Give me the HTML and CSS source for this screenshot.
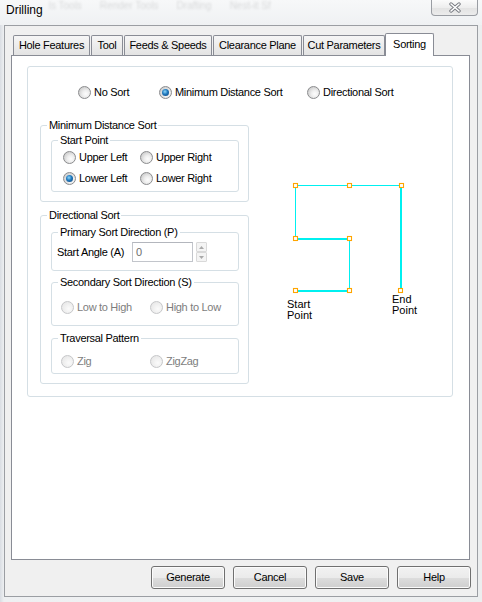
FILE: index.html
```html
<!DOCTYPE html>
<html>
<head>
<meta charset="utf-8">
<title>Drilling</title>
<link rel="stylesheet" href="styles.css">
</head>
<body>
<div class="window">
  <div class="titlebar">
    <div class="title">Drilling</div>
    <div class="ghost"><span>ls Tools</span><span>Render Tools</span><span>Drafting</span><span>Nest-it Sf</span></div>
    <div class="close">
      <svg width="14" height="11" viewBox="0 0 14 11">
        <path d="M3 2 L11 9 M11 2 L3 9" stroke="#777a80" stroke-width="3.4" stroke-linecap="round" fill="none"/>
        <path d="M3 2 L11 9 M11 2 L3 9" stroke="#ffffff" stroke-width="1.6" stroke-linecap="round" fill="none"/>
      </svg>
    </div>
  </div>
  <div class="client">
    <div class="tabs">
      <div class="tab t-hole">Hole Features</div>
      <div class="tab t-tool">Tool</div>
      <div class="tab t-feeds">Feeds &amp; Speeds</div>
      <div class="tab t-clear">Clearance Plane</div>
      <div class="tab t-cut">Cut Parameters</div>
      <div class="tab tab-active t-sort">Sorting</div>
    </div>
    <div class="panel">
      <div class="main-group">
        <div class="sort-row">
          <div class="radio r-nosort"><span class="dot"></span>No Sort</div>
          <div class="radio r-min"><span class="dot checked"></span>Minimum Distance Sort</div>
          <div class="radio"><span class="dot"></span>Directional Sort</div>
        </div>
        <div class="content">
          <div class="left-col">
            <fieldset class="group g-min">
              <legend>Minimum Distance Sort</legend>
              <fieldset class="group sub g-start">
                <legend>Start Point</legend>
                <div class="radio-grid grid-start">
                  <div class="radio"><span class="dot"></span>Upper Left</div>
                  <div class="radio"><span class="dot"></span>Upper Right</div>
                  <div class="radio"><span class="dot checked"></span>Lower Left</div>
                  <div class="radio"><span class="dot"></span>Lower Right</div>
                </div>
              </fieldset>
            </fieldset>
            <fieldset class="group g-dir">
              <legend>Directional Sort</legend>
              <fieldset class="group sub g-primary">
                <legend>Primary Sort Direction (P)</legend>
                <div class="angle-row">
                  <span class="angle-label">Start Angle (A)</span>
                  <span class="textbox">0</span>
                  <span class="spin">
                    <span class="spin-btn"><svg width="5" height="3" viewBox="0 0 5 3"><path d="M0 3 L2.5 0 L5 3 Z" fill="#a9a9a9"/></svg></span>
                    <span class="spin-btn"><svg width="5" height="3" viewBox="0 0 5 3"><path d="M0 0 L5 0 L2.5 3 Z" fill="#a9a9a9"/></svg></span>
                  </span>
                </div>
              </fieldset>
              <fieldset class="group sub g-second">
                <legend>Secondary Sort Direction (S)</legend>
                <div class="radio-grid grid-dis g-second-row">
                  <div class="radio disabled"><span class="dot"></span>Low to High</div>
                  <div class="radio disabled"><span class="dot"></span>High to Low</div>
                </div>
              </fieldset>
              <fieldset class="group sub g-trav">
                <legend>Traversal Pattern</legend>
                <div class="radio-grid grid-dis g-trav-row">
                  <div class="radio disabled"><span class="dot"></span>Zig</div>
                  <div class="radio disabled"><span class="dot"></span>ZigZag</div>
                </div>
              </fieldset>
            </fieldset>
          </div>
          <svg class="diagram" width="150" height="150" viewBox="0 0 150 150">
            <g fill="none" stroke="#00f0f0">
              <path d="M15.5 10.5 H121" stroke-width="1"/>
              <path d="M15.5 10.5 V63.5" stroke-width="1"/>
              <path d="M69.5 63.5 V115.5" stroke-width="1"/>
              <path d="M15 64 H70" stroke-width="2"/>
              <path d="M15 116 H70" stroke-width="2"/>
              <path d="M121 10 V116" stroke-width="2"/>
            </g>
            <g fill="#ffffff" stroke="#ffa500" stroke-width="1.1">
              <rect x="13.5" y="8.5" width="4" height="4"/>
              <rect x="67.5" y="8.5" width="4" height="4"/>
              <rect x="119.5" y="8.5" width="4" height="4"/>
              <rect x="13.5" y="61.5" width="4" height="4"/>
              <rect x="67.5" y="61.5" width="4" height="4"/>
              <rect x="13.5" y="113.5" width="4" height="4"/>
              <rect x="67.5" y="113.5" width="4" height="4"/>
              <rect x="118.5" y="113.5" width="4" height="4"/>
            </g>
            <g class="dtext">
              <text x="7" y="133">Start</text>
              <text x="7" y="144">Point</text>
              <text x="112" y="128">End</text>
              <text x="112" y="139">Point</text>
            </g>
          </svg>
        </div>
      </div>
    </div>
    <div class="buttons">
      <div class="btn">Generate</div>
      <div class="btn">Cancel</div>
      <div class="btn">Save</div>
      <div class="btn">Help</div>
    </div>
  </div>
</div>
</body>
</html>
```

FILE: styles.css
```css
html, body {
  margin: 0;
  padding: 0;
}

body {
  width: 482px;
  height: 602px;
  overflow: hidden;
  background: #eceef0;
  font-family: "Liberation Sans", Arial, sans-serif;
  font-size: 11px;
  letter-spacing: -0.3px;
  color: #000;
}

.window {
  height: 602px;
  display: flex;
  flex-direction: column;
  background: linear-gradient(90deg, #d9dde3 0, #eef0f2 4px, #f1f2f3 50%, #eceeef 100%);
}

/* ---------- title bar ---------- */
.titlebar {
  height: 25px;
  flex-shrink: 0;
  display: flex;
  align-items: flex-start;
  background: linear-gradient(#f7f8f9, #eff1f3);
}

.title {
  font-size: 12px;
  line-height: 15px;
  letter-spacing: 0;
  padding: 3px 0 0 6px;
}

.ghost {
  display: flex;
  gap: 18px;
  margin: 0 0 0 6px;
  font-size: 10px;
  line-height: 11px;
  letter-spacing: 0;
  color: rgba(70, 70, 70, 0.16);
  filter: blur(1.2px);
  white-space: nowrap;
}

.close {
  margin-left: auto;
  margin-right: 4px;
  width: 45px;
  height: 15px;
  border: 1px solid #9a9da3;
  border-top: none;
  border-radius: 0 0 4px 4px;
  background: linear-gradient(#fbfbfb, #eeeeee 50%, #e2e2e2 51%, #ececec);
  display: flex;
  align-items: center;
  justify-content: center;
}

/* ---------- client ---------- */
.client {
  margin-left: 4px;
  width: 472px;
  height: 570px;
  border: 1px solid #9b9ea3;
  background: #f0f0f0;
  display: flex;
  flex-direction: column;
}

.tabs {
  display: flex;
  align-items: flex-end;
  height: 22px;
  margin-top: 7px;
  padding-left: 8px;
}

.tab {
  box-sizing: border-box;
  height: 20px;
  border: 1px solid #898c95;
  border-bottom: none;
  border-radius: 2px 2px 0 0;
  background: linear-gradient(#f6f6f6, #e3e3e3);
  line-height: 19px;
  text-align: center;
  white-space: nowrap;
  margin-right: 1px;
}

.t-hole { width: 77px; }
.t-tool { width: 32px; }
.t-feeds { width: 88px; }
.t-clear { width: 89px; }
.t-cut { width: 82px; }
.t-sort { width: 49px; margin-left: -1px; }

.tab-active {
  height: 23px;
  margin-bottom: -1px;
  background: #ffffff;
  line-height: 20px;
  position: relative;
  z-index: 1;
}

.panel {
  margin-left: 6px;
  width: 457px;
  height: 503px;
  border: 1px solid #898c95;
  background: #ffffff;
}

.main-group {
  margin: 10px 0 0 15px;
  width: 424px;
  border: 1px solid #d5dfe5;
  border-radius: 3px;
  padding-bottom: 12px;
}

.sort-row {
  display: flex;
  height: 16px;
  margin: 17px 0 0 50px;
}

.r-nosort { width: 81px; }
.r-min { width: 148px; }

/* ---------- radios ---------- */
.radio {
  display: flex;
  align-items: center;
  height: 16px;
  white-space: nowrap;
}

.dot {
  position: relative;
  flex-shrink: 0;
  width: 11px;
  height: 11px;
  margin-right: 3px;
  border: 1px solid #8b8c8e;
  border-radius: 50%;
  background: radial-gradient(circle at 62% 62%, #fdfdfd 0, #eeeeee 35%, #cfcfcf 75%, #bababa 100%);
}

.dot.checked::after {
  content: "";
  position: absolute;
  left: 2px;
  top: 2px;
  width: 7px;
  height: 7px;
  border-radius: 50%;
  background: radial-gradient(circle at 42% 38%, #8fd8fb 0, #1f78bd 45%, #0f3f74 100%);
}

.radio.disabled {
  color: #7d7d7d;
}

.radio.disabled .dot {
  border-color: #c6c7c9;
  background: radial-gradient(circle at 62% 62%, #fbfbfb 0, #f0f0f0 45%, #e2e2e2 100%);
}

/* ---------- group boxes ---------- */
.content {
  display: flex;
  align-items: flex-start;
  margin-top: 19px;
}

.left-col {
  margin-left: 12px;
  width: 209px;
  display: flex;
  flex-direction: column;
}

fieldset.group {
  box-sizing: border-box;
  margin: 0;
  padding: 0;
  min-width: 0;
  border: 1px solid #d5dfe5;
  border-radius: 3px;
}

fieldset.group > legend {
  padding: 0 2px;
  margin-left: 6px;
  line-height: 13px;
  height: 13px;
  white-space: nowrap;
}

.g-min { width: 209px; }

.sub {
  width: 188px;
}

.g-start { margin: 2px 9px 9px 10px !important; }

.radio-grid {
  display: grid;
  row-gap: 5px;
}

.grid-start {
  grid-template-columns: 77px auto;
  padding: 2px 0 5px 11px;
}

.g-dir {
  width: 209px;
  margin-top: 7px !important;
}

.g-primary { margin: 4px 9px 0 10px !important; }
.g-second { margin: 5px 9px 0 10px !important; }
.g-trav { margin: 6px 9px 9px 10px !important; }

.angle-row {
  display: flex;
  align-items: center;
  height: 20px;
  padding: 3px 0 8px 5px;
}

.angle-label {
  width: 75px;
  white-space: nowrap;
}

.textbox {
  width: 56px;
  height: 18px;
  padding-left: 3px;
  border: 1px solid #c2c5cb;
  border-top-color: #b3b6bd;
  background: #ffffff;
  color: #6d6d6d;
  line-height: 18px;
}

.spin {
  display: flex;
  flex-direction: column;
  margin-left: 3px;
  width: 11px;
  height: 20px;
}

.spin-btn {
  box-sizing: border-box;
  height: 10px;
  border: 1px solid #d9d9d9;
  border-radius: 1px;
  background: #f4f4f4;
  display: flex;
  align-items: center;
  justify-content: center;
}

.grid-dis {
  grid-template-columns: 89px auto;
  padding-left: 9px;
}

.g-second-row { padding-top: 10px; padding-bottom: 10px; }
.g-trav-row { padding-top: 8px; padding-bottom: 4px; }

/* ---------- diagram ---------- */
.diagram {
  display: block;
  flex-shrink: 0;
  margin: 56px 0 0 31px;
}

.dtext text {
  font-family: "Liberation Sans", Arial, sans-serif;
  font-size: 11px;
  letter-spacing: 0;
  fill: #000;
}

/* ---------- buttons ---------- */
.buttons {
  display: flex;
  justify-content: flex-end;
  gap: 8px;
  margin-top: 6px;
  padding-right: 6px;
}

.btn {
  width: 72px;
  height: 21px;
  border: 1px solid #707070;
  border-radius: 3px;
  background: linear-gradient(#f2f2f2 0%, #ebebeb 50%, #dddddd 51%, #cfcfcf 100%);
  box-shadow: inset 0 0 0 1px #fbfbfb;
  text-align: center;
  line-height: 21px;
}
```
